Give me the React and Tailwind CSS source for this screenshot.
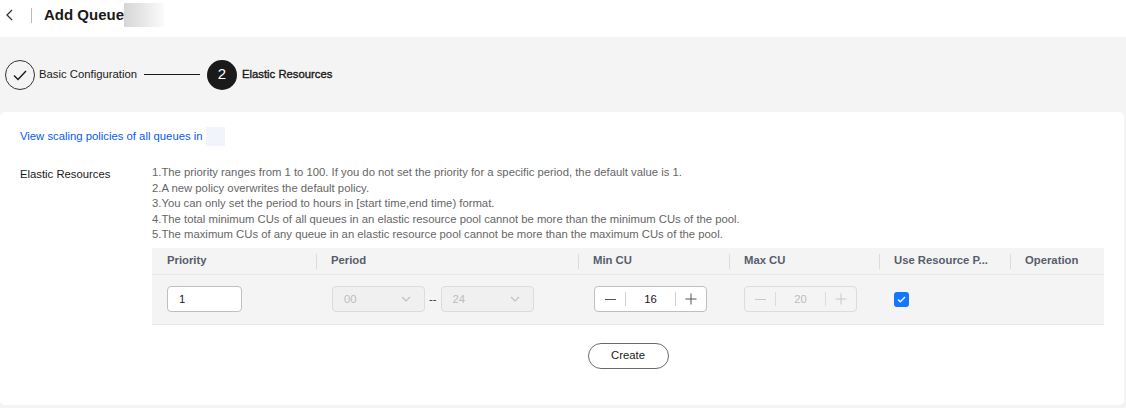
import React from 'react';

const columns = [
    { title: 'Priority', w: 'w-[164px]' },
    { title: 'Period', w: 'w-[262px]' },
    { title: 'Min CU', w: 'w-[151px]' },
    { title: 'Max CU', w: 'w-[150px]' },
    { title: 'Use Resource P...', w: 'w-[131px]' },
    { title: 'Operation', w: 'flex-1' },
];

const notes = [
    '1.The priority ranges from 1 to 100. If you do not set the priority for a specific period, the default value is 1.',
    '2.A new policy overwrites the default policy.',
    '3.You can only set the period to hours in [start time,end time) format.',
    '4.The total minimum CUs of all queues in an elastic resource pool cannot be more than the minimum CUs of the pool.',
    '5.The maximum CUs of any queue in an elastic resource pool cannot be more than the maximum CUs of the pool.',
];

const Chevron = () => (
    <svg width="12" height="12" viewBox="0 0 12 12" fill="none" stroke="#c2c2c2" strokeWidth="1.2">
        <path d="M2 4l4 4 4-4" />
    </svg>
);

const Stepper = ({ value, disabled }) => (
    <div className={`w-[113px] h-[26px] rounded-[4px] border flex items-center ${disabled ? 'border-[#dcdcdc] bg-[#f4f4f4] text-[#bdbdbd]' : 'border-[#bfbfbf] bg-white text-[#191919]'}`}>
        <div className="w-[30px] h-full flex items-center justify-center">
            <span className={`block w-[11px] h-px ${disabled ? 'bg-[#c8c8c8]' : 'bg-[#555]'}`} />
        </div>
        <span className={`w-px h-[14px] ${disabled ? 'bg-[#dcdcdc]' : 'bg-[#d0d0d0]'}`} />
        <div className="flex-1 text-center text-[11.3px]">{value}</div>
        <span className={`w-px h-[14px] ${disabled ? 'bg-[#dcdcdc]' : 'bg-[#d0d0d0]'}`} />
        <div className="w-[30px] h-full flex items-center justify-center">
            <svg width="12" height="12" viewBox="0 0 12 12" stroke={disabled ? '#c8c8c8' : '#555'} strokeWidth="1">
                <path d="M0.5 6h11M6 0.5v11" />
            </svg>
        </div>
    </div>
);

const Select = ({ value }) => (
    <div className="w-[93px] h-[26px] rounded-[4px] border border-[#dcdcdc] bg-[#f0f0f0] flex items-center justify-between pl-[11px] pr-[12px] text-[11.3px] text-[#bdbdbd]">
        <span>{value}</span>
        <Chevron />
    </div>
);

export default function App() {
    return (
        <div className="w-[1126px] h-[408px] bg-[#f4f4f4] font-['Liberation_Sans',Arial,sans-serif] text-[#191919] overflow-hidden">
            {/* Header */}
            <div className="h-[37px] bg-white flex items-center pb-[7px]">
                <svg className="ml-[5px]" width="9" height="12" viewBox="0 0 9 12" fill="none" stroke="#333" strokeWidth="1.3">
                    <path d="M7 1L2 6l5 5" />
                </svg>
                <span className="ml-[17px] w-px h-[15px] bg-[#bbb]" />
                <span className="ml-[12px] text-[15px] font-bold text-[#191919]">Add Queue</span>
                <span className="w-[40px] h-[24px] bg-gradient-to-r from-[#d6d6d6] to-[#fbfbfb]" />
            </div>

            {/* Steps */}
            <div className="h-[75px] flex items-center pl-[5px]">
                <div className="w-[30px] h-[30px] rounded-full border border-[#333] flex items-center justify-center">
                    <svg width="16" height="12" viewBox="0 0 16 12" fill="none" stroke="#191919" strokeWidth="1.4">
                        <path d="M2 6.5l4 4L14 2" />
                    </svg>
                </div>
                <span className="ml-[4px] text-[11.3px] text-[#191919]">Basic Configuration</span>
                <span className="ml-[7px] w-[56px] h-px bg-[#191919]" />
                <div className="ml-[7px] w-[30px] h-[30px] rounded-full bg-[#1a1a1a] text-white text-[15px] flex items-center justify-center">2</div>
                <span className="ml-[5px] text-[11.3px] text-[#191919] [-webkit-text-stroke:0.35px_#191919]">Elastic Resources</span>
            </div>

            {/* Card */}
            <div className="w-[1124px] h-[293px] bg-white rounded-[5px] pt-[16px]">
                <div className="pl-[20px] flex items-center h-[14px] mt-px">
                    <span className="text-[11.3px] text-[#0a59f7]">View scaling policies of all queues in</span>
                    <span className="ml-[3px] w-[19px] h-[19px] bg-[#f2f4fb]" />
                </div>

                <div className="flex mt-[22px]">
                    <div className="w-[152px] pl-[20px] text-[11.3px] pt-[1px] text-[#191919]">Elastic Resources</div>
                    <div className="w-[952px]">
                        <div className="text-[11.3px] text-[#666] leading-[15.5px]">
                            {notes.map((n) => (
                                <div key={n}>{n}</div>
                            ))}
                        </div>

                        {/* Table */}
                        <div className="mt-[5px] bg-[#f4f4f4]">
                            <div className="h-[27px] flex items-center border-b border-[#e8e8e8]">
                                {columns.map((c, i) => (
                                    <div key={c.title} className={`${c.w} h-full flex items-center relative pl-[15px] text-[11.3px] font-bold text-[#575d6c]`}>
                                        {i > 0 && <span className="absolute left-0 top-[6px] w-px h-[15px] bg-[#dcdcdc]" />}
                                        {c.title}
                                    </div>
                                ))}
                            </div>
                            <div className="h-[50px] flex items-center border-b border-[#e8e8e8]">
                                <div className="w-[164px] pl-[15px]">
                                    <div className="w-[75px] h-[26px] rounded-[4px] border border-[#bfbfbf] bg-white flex items-center pl-[11px] text-[11.3px]">1</div>
                                </div>
                                <div className="w-[262px] pl-[16px] flex items-center">
                                    <Select value="00" />
                                    <span className="mx-[4px] text-[11.3px] text-[#333]">--</span>
                                    <Select value="24" />
                                </div>
                                <div className="w-[151px] pl-[16px]">
                                    <Stepper value="16" />
                                </div>
                                <div className="w-[150px] pl-[15px]">
                                    <Stepper value="20" disabled />
                                </div>
                                <div className="w-[131px] pl-[15px]">
                                    <div className="w-[15px] h-[15px] rounded-[3px] bg-[#1476ff] flex items-center justify-center">
                                        <svg width="9" height="7" viewBox="0 0 9 7" fill="none" stroke="white" strokeWidth="1.4">
                                            <path d="M1 3.5l2.3 2.2L8 1" />
                                        </svg>
                                    </div>
                                </div>
                                <div className="flex-1" />
                            </div>
                        </div>

                        <div className="flex justify-center mt-[18px]">
                            <button className="w-[81px] h-[26px] rounded-full border border-[#6b6b6b] bg-white text-[11.3px] text-[#191919]">Create</button>
                        </div>
                    </div>
                </div>
            </div>
        </div>
    );
}
